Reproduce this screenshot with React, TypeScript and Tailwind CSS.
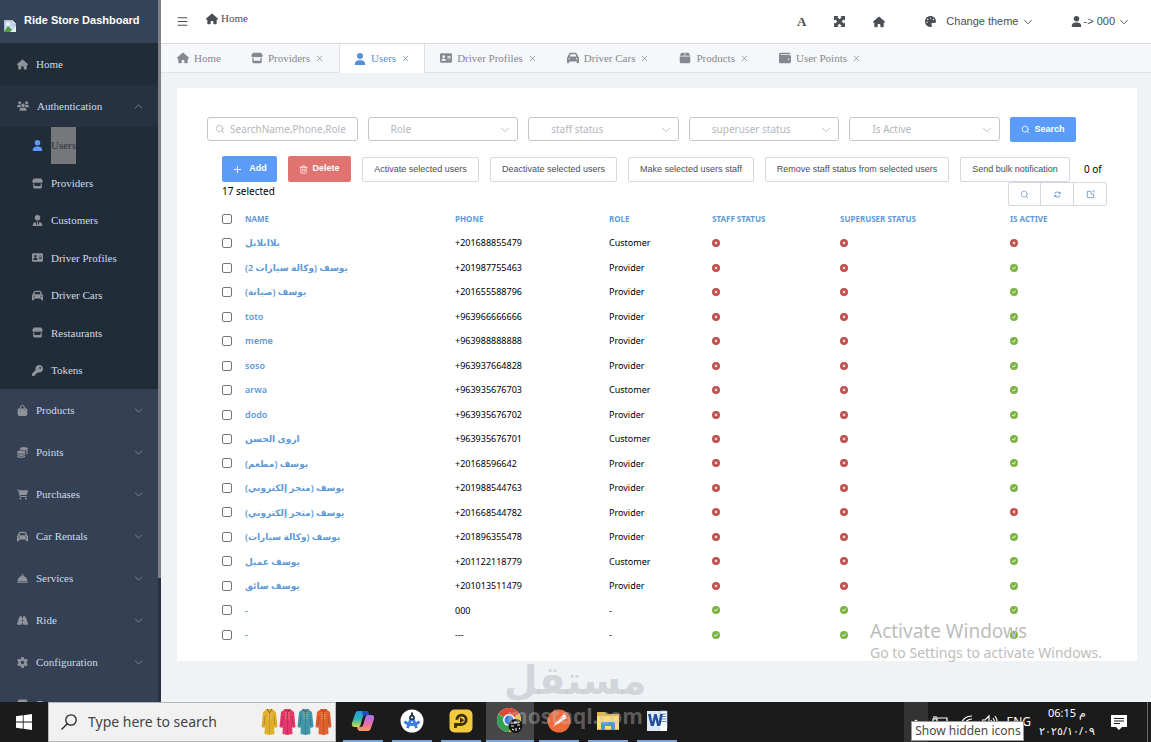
import React from 'react';
import {
  FaAddressCard,
  FaArrowsRotate,
  FaBagShopping,
  FaBellConcierge,
  FaBox,
  FaCar,
  FaCartShopping,
  FaCircleCheck,
  FaCircleXmark,
  FaCoins,
  FaGear,
  FaHouse,
  FaKey,
  FaPalette,
  FaRoad,
  FaStore,
  FaUser,
  FaUsers,
  FaUserTie,
  FaWallet,
} from 'react-icons/fa6';
import { ChevronDown, ChevronUp, Menu, Plus, Search, Trash2, X } from 'lucide-react';

const authItems = [
  { label: 'Users', icon: FaUser, active: true },
  { label: 'Providers', icon: FaStore },
  { label: 'Customers', icon: FaUserTie },
  { label: 'Driver Profiles', icon: FaAddressCard },
  { label: 'Driver Cars', icon: FaCar },
  { label: 'Restaurants', icon: FaStore },
  { label: 'Tokens', icon: FaKey },
];

const menuItems = [
  { label: 'Products', icon: FaBagShopping },
  { label: 'Points', icon: FaCoins },
  { label: 'Purchases', icon: FaCartShopping },
  { label: 'Car Rentals', icon: FaCar },
  { label: 'Services', icon: FaBellConcierge },
  { label: 'Ride', icon: FaRoad },
  { label: 'Configuration', icon: FaGear },
  { label: 'Common', icon: FaStore },
];

const tabs = [
  { label: 'Home', icon: FaHouse, fixed: true },
  { label: 'Providers', icon: FaStore },
  { label: 'Users', icon: FaUser, active: true },
  { label: 'Driver Profiles', icon: FaAddressCard },
  { label: 'Driver Cars', icon: FaCar },
  { label: 'Products', icon: FaBox },
  { label: 'User Points', icon: FaWallet },
];

const filters = ['Role', 'staff status', 'superuser status', 'Is Active'];

const bulkActions = [
  { label: 'Activate selected users', width: 'w-[117px]' },
  { label: 'Deactivate selected users', width: 'w-[127px]' },
  { label: 'Make selected users staff', width: 'w-[126px]' },
  { label: 'Remove staff status from selected users', width: 'w-[184px]' },
  { label: 'Send bulk notification', width: 'w-[110px]' },
];

const users = [
  { name: 'بلاابلابل', phone: '+201688855479', role: 'Customer', staff: false, active: false },
  { name: 'يوسف (وكالة سيارات 2)', phone: '+201987755463', role: 'Provider', staff: false, active: true },
  { name: 'يوسف (صيانة)', phone: '+201655588796', role: 'Provider', staff: false, active: true },
  { name: 'toto', phone: '+963966666666', role: 'Provider', staff: false, active: true },
  { name: 'meme', phone: '+963988888888', role: 'Provider', staff: false, active: true },
  { name: 'soso', phone: '+963937664828', role: 'Provider', staff: false, active: true },
  { name: 'arwa', phone: '+963935676703', role: 'Customer', staff: false, active: true },
  { name: 'dodo', phone: '+963935676702', role: 'Provider', staff: false, active: true },
  { name: 'اروى الحسن', phone: '+963935676701', role: 'Customer', staff: false, active: true },
  { name: 'يوسف (مطعم)', phone: '+20168596642', role: 'Provider', staff: false, active: true },
  { name: 'يوسف (متجر إلكتروني)', phone: '+201988544763', role: 'Provider', staff: false, active: true },
  { name: 'يوسف (متجر إلكتروني)', phone: '+201668544782', role: 'Provider', staff: false, active: false },
  { name: 'يوسف (وكالة سيارات)', phone: '+201896355478', role: 'Provider', staff: false, active: true },
  { name: 'يوسف عميل', phone: '+201122118779', role: 'Customer', staff: false, active: true },
  { name: 'يوسف سائق', phone: '+201013511479', role: 'Provider', staff: false, active: true },
  { name: '-', phone: '000', role: '-', staff: true, active: true },
  { name: '-', phone: '---', role: '-', staff: true, active: true },
];

const checkbox =
  'block size-[10px] appearance-none rounded-[2px] border border-[#767676] bg-white checked:bg-[#5a9cf8]';

const Status = ({ on }: { on: boolean }) =>
  on ? (
    <FaCircleCheck className="size-2 text-[#7cb342]" aria-label="yes" />
  ) : (
    <FaCircleXmark className="size-2 text-[#c0504d]" aria-label="no" />
  );

const BrokenImage = () => (
  <svg viewBox="0 0 12 12" className="size-3 shrink-0">
    <path d="M0 0h8l4 4v8H0z" fill="#c5d9f0" stroke="#9aa3ad" strokeWidth="1" />
    <path d="M8 0v4h4" fill="#fff" stroke="#9aa3ad" strokeWidth=".7" />
    <path d="M0 12l4-6L8 10l2-2v4z" fill="#4c9c3f" />
    <circle cx="4" cy="4" r="1.500" fill="#fff" />
    <path d="M12 6L6 12h6z" fill="#e8edf2" />
  </svg>
);

const Sidebar = () => (
  <aside className="flex w-[161px] shrink-0 overflow-hidden bg-[#344054] font-['Liberation_Serif',serif] text-[11px] text-[#cfdbe8]">
    <div className="min-w-0 flex-1">
      <div className="flex h-[43px] items-center gap-2 bg-[#344357] pl-1 font-['Liberation_Sans',sans-serif] font-bold text-white">
        <div className="pt-2">
          <BrokenImage />
        </div>
        <span className="whitespace-nowrap pb-0.5">Ride Store Dashboard</span>
      </div>
      <nav>
        <a href="#home" className="flex h-[42px] items-center gap-2 bg-[#212c39] pl-[17px]">
          <FaHouse className="size-[11px] text-[#909399]" />
          Home
        </a>
        <button className="flex h-[42px] w-full items-center gap-2 bg-[#263242] pl-[17px] pr-[13px]">
          <FaUsers className="size-[12px] text-[#909399]" />
          Authentication
          <ChevronUp className="ml-auto size-[13px] text-[#909399]" strokeWidth={1.5} />
        </button>
        <div className="grid h-[262px] auto-rows-fr bg-[#212c39]">
          {authItems.map((item) => (
            <a key={item.label} href="#auth" className="flex items-center gap-2 pl-8">
              <item.icon className={item.active ? 'size-[11px] text-[#5a9cf8]' : 'size-[11px] text-[#909399]'} />
              {item.active ? (
                <span className="flex h-full items-center bg-[#75777a] text-[#30363d]">{item.label}</span>
              ) : (
                <span>{item.label}</span>
              )}
            </a>
          ))}
        </div>
        {menuItems.map((item) => (
          <button key={item.label} className="flex h-[42px] w-full items-center gap-2 pl-[17px] pr-[13px]">
            <item.icon className="size-[11px] text-[#909399]" />
            {item.label}
            <ChevronDown className="ml-auto size-[13px] text-[#909399]" strokeWidth={1.5} />
          </button>
        ))}
      </nav>
    </div>
    <div className="w-[3px] bg-[#263142]">
      <div className="h-[578px] bg-[#7f8086]" />
    </div>
  </aside>
);

const TopBar = () => (
  <header className="flex h-11 items-center border-b border-[#d5d8de] bg-white pl-[15px] pr-5 font-['Liberation_Sans',sans-serif] text-[11px] text-[#4b4e54]">
    <button aria-label="Toggle menu">
      <Menu className="size-[13px]" />
    </button>
    <a href="#home" className="ml-[17px] flex items-center gap-[3px] pb-1.5 font-['Liberation_Serif',serif]">
      <FaHouse className="size-3" />
      Home
    </a>
    <div className="ml-auto flex items-center">
      <button className="font-['Liberation_Serif',serif] text-[13px] font-bold" aria-label="Font size">
        A
      </button>
      <button className="ml-7" aria-label="Full screen">
        <svg viewBox="0 0 12 12" className="size-[11px]" fill="currentColor">
          <path d="M0 0h5L3.700 1.300 6 3.600l2.300-2.300L7 0h5v5l-1.300-1.300L8.400 6l2.300 2.300L12 7v5H7l1.300-1.300L6 8.400l-2.300 2.300L5 12H0V7l1.300 1.300L3.600 6 1.300 3.700 0 5z" />
        </svg>
      </button>
      <a href="#home" className="ml-7" aria-label="Home">
        <FaHouse className="size-3" />
      </a>
      <button className="ml-10 flex items-center">
        <FaPalette className="size-[11px]" />
        <span className="ml-2.5">Change theme</span>
        <ChevronDown className="ml-0.5 size-[14px]" strokeWidth={1.5} />
      </button>
      <button className="ml-9 flex items-center">
        <FaUser className="size-[11px]" />
        <span className="ml-0.5">-&gt; 000</span>
        <ChevronDown className="ml-0.5 size-[14px]" strokeWidth={1.5} />
      </button>
    </div>
  </header>
);

const TabBar = () => (
  <nav className="flex h-[29px] border-b border-[#dfe3ea] bg-[#f5f7fb] pl-px font-['Liberation_Serif',serif] text-[11px] text-[#85888f]">
    {tabs.map((tab) => (
      <a
        key={tab.label}
        href="#tab"
        className={
          tab.active
            ? 'flex h-[29px] items-center gap-[5px] border-x border-[#dcdfe6] bg-white px-[14px] text-[#5590dc]'
            : 'flex items-center gap-[5px] px-[15px]'
        }
      >
        <tab.icon className="size-3" />
        <span className="whitespace-nowrap">{tab.label}</span>
        {!tab.fixed && <X className="size-[9px]" strokeWidth={2} />}
      </a>
    ))}
  </nav>
);

const FilterBar = () => (
  <form className="flex max-w-[869px] gap-[10px] text-[10px] text-[#b4b7bd]">
    <div className="relative min-w-0 flex-1">
      <Search className="absolute left-2 top-[7px] size-[10px]" strokeWidth={2} />
      <input
        aria-label="Search"
        placeholder="SearchName,Phone,Role"
        className="h-6 w-full rounded-[3px] border border-[#c4c6cb] pl-[22px] outline-none placeholder:text-[#b4b7bd]"
      />
    </div>
    {filters.map((filter) => (
      <div key={filter} className="relative min-w-0 flex-1">
        <select
          aria-label={filter}
          className="h-6 w-full appearance-none rounded-[3px] border border-[#c4c6cb] bg-white pl-[22px] outline-none"
        >
          <option>{filter}</option>
        </select>
        <ChevronDown className="pointer-events-none absolute right-1.5 top-1.5 size-[14px]" strokeWidth={1.5} />
      </div>
    ))}
    <button
      type="button"
      className="flex h-[25px] w-[66px] items-center justify-center gap-1 rounded-[2px] bg-[#5a9cf8] font-['Liberation_Sans',sans-serif] text-[9px] font-bold text-white"
    >
      <Search className="size-[9px]" />
      Search
    </button>
  </form>
);

const Actions = () => (
  <div className="mt-[14px] pl-[15px] text-[9px] text-black">
    <div className="flex items-end gap-[11px] font-['Liberation_Sans',sans-serif]">
      <button className="flex h-[26px] w-[55px] items-center justify-center gap-1.5 rounded-[2px] bg-[#5a9cf8] font-bold text-white">
        <Plus className="size-[11px]" />
        Add
      </button>
      <button className="flex h-[26px] w-[63px] items-center justify-center gap-1 rounded-[2px] bg-[#e17370] font-bold text-white">
        <Trash2 className="size-[9px]" />
        Delete
      </button>
      {bulkActions.map((action) => (
        <button
          key={action.label}
          className={`h-[25px] whitespace-nowrap rounded-[2px] border border-[#d5d8de] bg-white text-[#4b4e54] ${action.width}`}
        >
          {action.label}
        </button>
      ))}
      <span className="self-center whitespace-nowrap pl-[3px] font-['Noto_Sans',sans-serif] text-[10px]">0 of</span>
    </div>
    <div className="flex justify-between">
      <span className="pt-0.5 text-[10px]">17 selected</span>
      <div className="flex h-6 divide-x divide-[#d5d8de] rounded-[2px] border border-[#d5d8de] text-[#6f9fd3]">
        <button className="flex w-8 items-center justify-center" aria-label="Search">
          <Search className="size-[9px]" />
        </button>
        <button className="flex w-[33px] items-center justify-center" aria-label="Refresh">
          <FaArrowsRotate className="size-[7px]" />
        </button>
        <button className="flex w-8 items-center justify-center" aria-label="Export">
          <svg viewBox="0 0 10 10" className="size-[9px]" fill="none" stroke="currentColor">
            <path d="M5.500 1.500h-4v7h7v-4M5.500 1.500v3h3M7 1h2v2" />
          </svg>
        </button>
      </div>
    </div>
  </div>
);

const UsersTable = () => (
  <div className="pl-[15px]">
    <table className="h-[441px] w-full table-fixed text-left text-[9px] text-black">
      <thead>
        <tr className="h-[25px] text-[8px] text-[#5d9ad9]">
          <th className="w-[23px]">
            <input type="checkbox" aria-label="Select all" className={checkbox} />
          </th>
          <th className="w-[210px]">NAME</th>
          <th className="w-[154px]">PHONE</th>
          <th className="w-[103px]">ROLE</th>
          <th className="w-[128px]">STAFF STATUS</th>
          <th className="w-[170px]">SUPERUSER STATUS</th>
          <th>IS ACTIVE</th>
        </tr>
      </thead>
      <tbody>
        {users.map((user, i) => (
          <tr key={i}>
            <td>
              <input type="checkbox" aria-label={`Select ${user.phone}`} className={checkbox} />
            </td>
            <td>
              <a href="#user" className="font-semibold text-[#5d9ad9]">
                {user.name}
              </a>
            </td>
            <td>{user.phone}</td>
            <td>{user.role}</td>
            <td>
              <Status on={user.staff} />
            </td>
            <td>
              <Status on={user.staff} />
            </td>
            <td>
              <Status on={user.active} />
            </td>
          </tr>
        ))}
      </tbody>
    </table>
  </div>
);

const robes = ['#e0b02c', '#e4386c', '#4397ab', '#e0602e'];

const Robe = ({ color }: { color: string }) => (
  <svg viewBox="0 0 17 28" className="h-7 w-[17px]">
    <path d="M6 1h5l4 3 1.500 15-3 1-.5-4 .5 10-5 1-5-1 .5-10-.5 4-3-1L2 4z" fill={color} />
    <path d="M6 1l2.500 4L11 1" stroke="#7b2c1d" strokeWidth=".7" fill="none" />
    <path d="M8.500 5v21" stroke="#00000030" strokeWidth=".7" />
    <path d="M7 4v7M10 4v7" stroke="#f7d774" strokeWidth=".7" strokeDasharray="1 1" />
    <path d="M4 8l-1 10M13 8l1 10" stroke="#00000030" />
  </svg>
);

const CopilotIcon = () => (
  <svg viewBox="0 0 24 24" className="size-6">
    <defs>
      <linearGradient id="cpa" x1="0" y1="0" x2="0" y2="1">
        <stop offset="0" stopColor="#2794ea" />
        <stop offset=".5" stopColor="#2bb5b0" />
        <stop offset="1" stopColor="#d6d846" />
      </linearGradient>
      <linearGradient id="cpb" x1="0" y1="0" x2="0" y2="1">
        <stop offset="0" stopColor="#a96ff0" />
        <stop offset=".6" stopColor="#ee6fa6" />
        <stop offset="1" stopColor="#f6a056" />
      </linearGradient>
    </defs>
    <path d="M7 2h8c2 0 2.500 2 3 4h-3c-2 0-3 1-3.500 3L9.500 16c-.5 1.500-1 2-2.500 2H4c-3 0-3.500-2-3-4L4 5c.6-2 1.500-3 3-3z" fill="url(#cpa)" />
    <path d="M17 22H9c-2 0-2.500-2-3-4h3c2 0 3-1 3.500-3l2-7c.5-1.500 1-2 2.500-2h3c3 0 3.500 2 3 4l-3 9c-.6 2-1.500 3-3 3z" fill="url(#cpb)" />
    <path d="M11 2h4c2 0 2.500 2 3 4h-3c-1.500 0-2.500.7-3 2z" fill="#1c4fc0" />
  </svg>
);

const StudioIcon = () => (
  <svg viewBox="0 0 24 24" className="size-6">
    <circle cx="12" cy="12" r="11.500" fill="#fff" />
    <path d="M4.500 12.500c4 4 11 4 15 0" stroke="#3f7fe0" strokeWidth="3" fill="none" />
    <path d="M12 7L7.500 19M12 7l4.500 12" stroke="#3f7fe0" strokeWidth="3" />
    <path d="M12 3.500v3" stroke="#24364b" strokeWidth="2" />
    <circle cx="12" cy="8.500" r="2.800" fill="#24364b" />
    <circle cx="12" cy="8.500" r="1" fill="#fff" />
  </svg>
);

const PlayerIcon = () => (
  <svg viewBox="0 0 24 24" className="size-6">
    <rect x=".5" y=".5" width="23" height="23" rx="5" fill="#f5c93c" />
    <path d="M6.500 19v-3.500h6a4.700 4.700 0 1 0-4.700-4.700" stroke="#3b2e12" strokeWidth="2.800" fill="none" />
    <path d="M11 8.500l4.500 2.800-4.500 2.800z" fill="#3b2e12" />
  </svg>
);

const ChromeIcon = () => (
  <svg viewBox="0 0 28 26" className="h-[26px] w-7">
    <circle cx="13" cy="12" r="12" fill="#fff" />
    <path d="M13 12L2.600 6A12 12 0 0 1 23.400 6z" fill="#df4936" />
    <path d="M13 12L23.400 6A12 12 0 0 1 13 24z" fill="#f6c62e" />
    <path d="M13 12v12A12 12 0 0 1 2.600 6z" fill="#35a152" />
    <circle cx="13" cy="12" r="6" fill="#fff" />
    <circle cx="13" cy="12" r="4.500" fill="#3e7de0" />
    <circle cx="19.500" cy="18" r="7" fill="#161616" />
    <path d="M15 15l9-1M15 18h3M21 17h3M16 21l2 1M20 20v3M23 20l1 1M19 13v3" stroke="#e8e8e8" strokeWidth="1.200" />
  </svg>
);

const PostmanIcon = () => (
  <svg viewBox="0 0 24 24" className="size-6">
    <circle cx="12" cy="12" r="11.500" fill="#ee6b3b" />
    <path d="M16.500 5.500a2.500 2.500 0 1 1 .5 5L11 15l-5 3 3-5z" fill="#fff" />
    <path d="M9 13l7-5M7 17l4-2" stroke="#ee6b3b" strokeWidth=".8" />
  </svg>
);

const ExplorerIcon = () => (
  <svg viewBox="0 0 24 24" className="size-6">
    <path d="M1 3h8l2 2h12v16H1z" fill="#e2b344" />
    <path d="M1 7h22v13H1z" fill="#fbdc78" />
    <path d="M5 21v-7a1 1 0 0 1 1-1h12a1 1 0 0 1 1 1v7h-4v-4H9v4z" fill="#4a97d3" />
  </svg>
);

const WordIcon = () => (
  <svg viewBox="0 0 24 24" className="size-6">
    <path d="M2 2h18v20H2z" fill="#dfe9f6" />
    <path d="M15 2h7v18h-7z" fill="#fff" stroke="#8cb0de" strokeWidth=".7" />
    <path d="M16 5h5M16 7.500h5M16 10h5M16 12.500h5" stroke="#5d8acb" />
    <path d="M3 5h2.800l1.500 8 2-8h2.400l2 8 1.500-8H18l-2.800 12h-3L10.500 10 8.800 17h-3z" fill="#234f9c" />
    <path d="M14 17l8-2v7h-6z" fill="#fff" />
  </svg>
);

const apps = [CopilotIcon, StudioIcon, PlayerIcon, ChromeIcon, PostmanIcon, ExplorerIcon, WordIcon];

const Taskbar = () => (
  <footer className="flex h-10 shrink-0 items-stretch bg-[#1b1b1b] font-['Noto_Sans',sans-serif] text-white">
    <button className="flex w-12 items-center justify-center" aria-label="Start">
      <svg viewBox="0 0 16 16" className="size-4" fill="#fff">
        <path d="M0 2.200L6.800 1.300v6.300H0zM7.600 1.200L16 0v7.600H7.600zM0 8.400h6.800v6.300L0 13.800zM7.600 8.400H16V16l-8.400-1.200z" />
      </svg>
    </button>
    <label className="flex w-[288px] items-center border border-[#b8b8b8] bg-[#f1f1f1] pl-3">
      <svg viewBox="0 0 16 16" className="size-4 shrink-0" fill="none" stroke="#222" strokeWidth="1.300">
        <circle cx="10" cy="6" r="5.200" />
        <path d="M6.300 9.700L.5 15.500" />
      </svg>
      <input
        aria-label="Type here to search"
        placeholder="Type here to search"
        className="ml-[11px] min-w-0 flex-1 text-sm text-[#444] outline-none placeholder:text-[#444]"
      />
      <span className="flex gap-px pr-[3px]">
        {robes.map((color) => (
          <Robe key={color} color={color} />
        ))}
      </span>
    </label>
    <div className="ml-[3px] flex gap-px">
      {apps.map((Icon, i) => (
        <button
          key={i}
          aria-label={`App ${i + 1}`}
          className={i === 3 ? 'flex w-12 flex-col items-center bg-[#474747]' : 'flex w-12 flex-col items-center'}
        >
          <span className="flex flex-1 items-center">
            <Icon />
          </span>
          <span className={i === 3 ? 'h-0.5 w-full bg-[#7ba7d8]' : 'h-0.5 w-10 bg-[#7ba7d8]'} />
        </button>
      ))}
    </div>
    <div className="ml-auto flex items-center">
      <div className="relative h-full">
        <button className="flex h-full w-6 items-center justify-center bg-[#333]" aria-label="Show hidden icons">
          <ChevronUp className="size-[14px]" />
        </button>
        <div
          role="tooltip"
          className="absolute left-[7px] top-[19px] z-10 w-[113px] whitespace-nowrap border border-[#999] bg-white text-center text-xs leading-[18px] text-[#4a4a4a]"
        >
          Show hidden icons
        </div>
      </div>
      <svg viewBox="0 0 16 16" className="ml-1 size-4" fill="none" stroke="#fff" strokeWidth="1.200">
        <path d="M5 4h10v7H5M1 5h4v3a2 2 0 0 1-4 0zM2 5V2M4 5V2M3 10v3h4" />
      </svg>
      <svg viewBox="0 0 16 16" className="ml-3 size-4" fill="none" stroke="#fff" strokeWidth="1.200">
        <path d="M1 10A11 11 0 0 1 12 2M4 12A8 8 0 0 1 12 5M7 14a5 5 0 0 1 5-5" />
      </svg>
      <svg viewBox="0 0 16 16" className="ml-1.5 size-4" fill="none" stroke="#fff" strokeWidth="1.200">
        <path d="M0 6h3l4-4v12l-4-4H0zM9 6q1.500 2 0 4M11 4q3 4 0 8M13 2q4.500 6 0 12" />
      </svg>
      <span className="ml-2 text-xs">ENG</span>
      <div className="ml-2 flex w-[56px] flex-col items-center whitespace-nowrap text-[11px] leading-[18px]">
        <time>06:15 م</time>
        <time>٢٠٢٥/١٠/٠٩</time>
      </div>
      <button className="ml-4 mr-5" aria-label="Notifications">
        <svg viewBox="0 0 16 16" className="size-4">
          <path d="M0 1h16v12h-5l-3 3-3-3H0z" fill="#fff" />
          <path d="M3 4.500h10M3 7h10M3 9.500h6" stroke="#1b1b1b" />
        </svg>
      </button>
      <span className="mr-[3px] h-full w-px bg-[#6a6a6a]" />
    </div>
  </footer>
);

const App = () => {
  return (
    <div className="relative flex h-screen flex-col overflow-hidden bg-[#eff3f6]">
      <div className="flex min-h-0 flex-1">
        <Sidebar />
        <div className="flex min-w-0 flex-1 flex-col">
          <TopBar />
          <TabBar />
          <main className="px-4 pr-[14px] pt-[15px] font-['Noto_Sans','DejaVu_Sans',sans-serif]">
            <div className="bg-white px-[30px] pb-[14px] pt-[29px]">
              <FilterBar />
              <Actions />
              <UsersTable />
            </div>
          </main>
        </div>
      </div>
      <Taskbar />

      {/* overlays */}
      <div className="pointer-events-none absolute bottom-[79px] right-[45px] w-[236px] whitespace-nowrap font-['Noto_Sans',sans-serif] text-[#bdbdbd]">
        <p className="text-[19px] leading-6">Activate Windows</p>
        <p className="text-sm leading-5">Go to Settings to activate Windows.</p>
      </div>
      <div className="pointer-events-none absolute bottom-[14px] left-[505px] flex w-[140px] flex-col items-center font-bold">
        <p className="font-['DejaVu_Sans',sans-serif] text-[39px] leading-[46px] text-[#8a8f94]/30">مستقل</p>
        <p className="font-['Open_Sans',sans-serif] text-[21px] leading-6 text-[#c4c4c4]/40">mostaql.com</p>
      </div>
    </div>
  );
};

export default App;
